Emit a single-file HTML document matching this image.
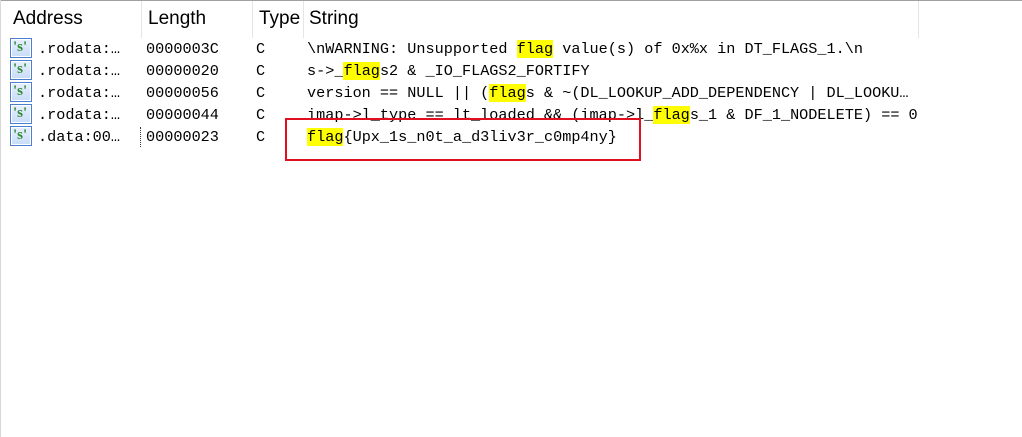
<!DOCTYPE html><html><head><style>
body{margin:0;width:1022px;height:437px;background:#fff;position:relative;overflow:hidden;font-family:"Liberation Mono","Noto Sans CJK SC",monospace;}
.top{position:absolute;left:0;top:0;width:1022px;height:1px;background:#a0a0a0}
.left{position:absolute;left:0;top:0;width:1px;height:437px;background:#d8d8d8}
.h{position:absolute;top:8px;font:19px "Liberation Sans",sans-serif;color:#000}
.sep{position:absolute;top:1px;width:1px;height:37px;background:#e5e5e5}
.t{position:absolute;font-size:15.2px;color:#000;white-space:pre;line-height:20px}
.hl{background:#ffff00}
.ic{position:absolute;left:10px;width:20px;height:18px;border:1px solid #4a7fd0;background:linear-gradient(#e8f0ff,#c8dcf8);box-shadow:inset 0 0 0 1px #fff}
.ic:after{content:"'s'";position:absolute;left:2px;top:0px;font:bold 15px "Liberation Serif",serif;color:#2e8b2e}
.box{position:absolute;left:285px;top:118px;width:352px;height:39px;border:2px solid #e01020}
</style></head><body>
<div class="top"></div><div class="left"></div>
<div class="h" style="left:13px">Address</div>
<div class="h" style="left:148px">Length</div>
<div class="h" style="left:259px;width:42px;overflow:hidden">Type</div>
<div class="h" style="left:309px">String</div>
<div class="sep" style="left:141px"></div><div class="sep" style="left:252px"></div><div class="sep" style="left:303px"></div><div class="sep" style="left:918px"></div>
<div class="ic" style="top:38px"></div><div class="ic" style="top:60px"></div><div class="ic" style="top:82px"></div><div class="ic" style="top:104px"></div><div class="ic" style="top:126px"></div>
<div class="t" style="left:38px;top:39px">.rodata:…</div>
<div class="t" style="left:38px;top:61px">.rodata:…</div>
<div class="t" style="left:38px;top:83px">.rodata:…</div>
<div class="t" style="left:38px;top:105px">.rodata:…</div>
<div class="t" style="left:38px;top:127px">.data:00…</div>
<div style="position:absolute;left:140px;top:127px;height:20px;border-left:1px dotted #333"></div>
<div class="t" style="left:146px;top:39px">0000003C</div>
<div class="t" style="left:146px;top:61px">00000020</div>
<div class="t" style="left:146px;top:83px">00000056</div>
<div class="t" style="left:146px;top:105px">00000044</div>
<div class="t" style="left:146px;top:127px">00000023</div>
<div class="t" style="left:256px;top:39px">C</div><div class="t" style="left:256px;top:61px">C</div><div class="t" style="left:256px;top:83px">C</div><div class="t" style="left:256px;top:105px">C</div><div class="t" style="left:256px;top:127px">C</div>
<div class="t" style="left:307px;top:39px">\nWARNING: Unsupported <span class="hl">flag</span> value(s) of 0x%x in DT_FLAGS_1.\n</div>
<div class="t" style="left:307px;top:61px">s-&gt;_<span class="hl">flag</span>s2 &amp; _IO_FLAGS2_FORTIFY</div>
<div class="t" style="left:307px;top:83px">version == NULL || (<span class="hl">flag</span>s &amp; ~(DL_LOOKUP_ADD_DEPENDENCY | DL_LOOKU…</div>
<div class="t" style="left:307px;top:105px">imap-&gt;l_type == lt_loaded &amp;&amp; (imap-&gt;l_<span class="hl">flag</span>s_1 &amp; DF_1_NODELETE) == 0</div>
<div class="t" style="left:307px;top:127px"><span class="hl">flag</span>{Upx_1s_n0t_a_d3liv3r_c0mp4ny}</div>
<div class="box"></div>
</body></html>
